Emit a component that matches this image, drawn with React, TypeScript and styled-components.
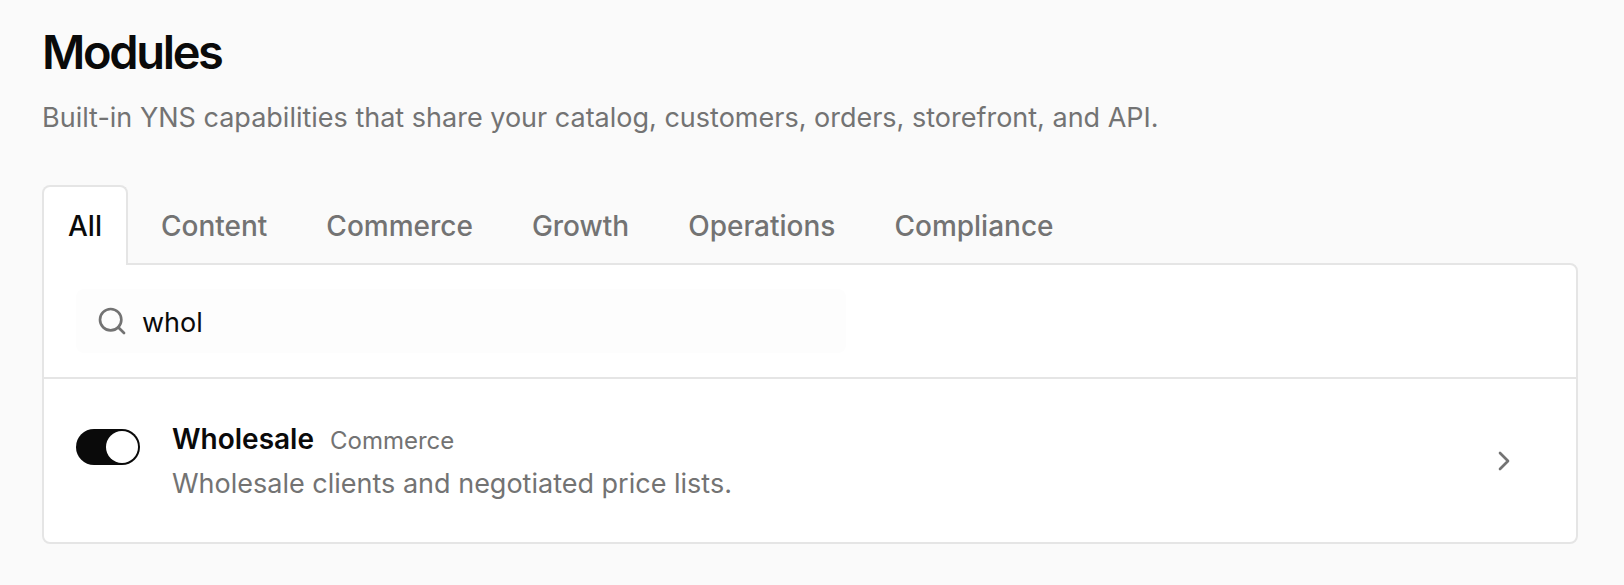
import React, { useState } from "react";
import styled, { createGlobalStyle } from "styled-components";
import { ChevronRight, Search } from "lucide-react";

const GlobalStyle = createGlobalStyle`
  *, *::before, *::after { box-sizing: border-box; }
  body {
    margin: 0;
    background: #fafafa;
    color: #0a0a0a;
    font-family: Inter, "Liberation Sans", sans-serif;
    font-size: 27px;
    line-height: 40px;
  }
  h1, h2, p, ul { margin: 0; padding: 0; }
  button, input { font: inherit; color: inherit; }
`;

const Page = styled.main`
  padding: 20px 46px 40px 42px;
`;

const Title = styled.h1`
  font-size: 47px;
  line-height: 64px;
  font-weight: 600;
  letter-spacing: -0.05em;
`;

const Muted = styled.p`
  color: #737373;
`;

const Header = styled.header`
  display: flex;
  flex-direction: column;
  gap: 14px;
  margin-bottom: 47px;
`;

const TabList = styled.div`
  display: flex;
  gap: 7px;
`;

const Tab = styled.button<{ $active: boolean }>`
  position: relative;
  height: 80px;
  margin-bottom: -2px;
  padding: 0 24px;
  border: 2px solid ${(p) => (p.$active ? "#e5e5e5" : "transparent")};
  border-bottom: 0;
  border-radius: 8px 8px 0 0;
  background: ${(p) => (p.$active ? "#fff" : "transparent")};
  color: ${(p) => (p.$active ? "#0a0a0a" : "#737373")};
  font-size: 28px;
  font-weight: 500;
  cursor: pointer;
  z-index: ${(p) => (p.$active ? 1 : "auto")};
`;

const Panel = styled.section`
  border: 2px solid #e5e5e5;
  border-radius: 0 8px 8px 8px;
  background: #fff;
`;

const Toolbar = styled.div`
  padding: 24px 32px;
  border-bottom: 2px solid #e5e5e5;
`;

const SearchField = styled.label`
  display: flex;
  align-items: center;
  gap: 14px;
  height: 64px;
  max-width: 770px;
  padding: 0 20px;
  border-radius: 8px;
  background: #fdfdfd;
  color: #737373;
`;

const SearchInput = styled.input`
  flex: 1;
  min-width: 0;
  padding: 3px 0 0;
  border: 0;
  outline: 0;
  background: transparent;
  color: #0a0a0a;
`;

const ModuleList = styled.ul`
  list-style: none;
`;

const ModuleRow = styled.li`
  display: flex;
  align-items: center;
  gap: 32px;
  padding: 38px 32px;
`;

const Switch = styled.input`
  appearance: none;
  align-self: flex-start;
  flex: none;
  display: flex;
  justify-content: flex-start;
  width: 64px;
  height: 36px;
  margin: 12px 0 0;
  padding: 2px;
  border-radius: 18px;
  background: #e5e5e5;
  cursor: pointer;

  &::before {
    content: "";
    width: 32px;
    height: 32px;
    border-radius: 50%;
    background: #fff;
  }

  &:checked {
    justify-content: flex-end;
    background: #0a0a0a;
  }
`;

const ModuleText = styled.div`
  flex: 1;
  min-width: 0;
`;

const ModuleHeading = styled.div`
  display: flex;
  align-items: baseline;
  gap: 16px;
  margin-bottom: 3px;
`;

const ModuleName = styled.h2`
  font-size: 28px;
  line-height: 44px;
  font-weight: 600;
`;

const Category = styled.span`
  color: #737373;
  font-size: 24px;
  line-height: 32px;
`;

const OpenButton = styled.button`
  display: flex;
  padding: 24px;
  border: 0;
  background: transparent;
  color: #737373;
  cursor: pointer;
`;

const tabs = ["All", "Content", "Commerce", "Growth", "Operations", "Compliance"];

const modules = [
  {
    name: "Wholesale",
    category: "Commerce",
    description: "Wholesale clients and negotiated price lists.",
  },
];

export default function App() {
  const [active, setActive] = useState("All");
  const [query, setQuery] = useState("whol");
  const [enabled, setEnabled] = useState<Record<string, boolean>>({ Wholesale: true });

  const visible = modules.filter(
    (m) =>
      (active === "All" || m.category === active) &&
      m.name.toLowerCase().includes(query.toLowerCase()),
  );

  return (
    <>
      <GlobalStyle />
      <Page>
        <Header>
          <Title>Modules</Title>
          <Muted>
            Built-in YNS capabilities that share your catalog, customers, orders, storefront, and API.
          </Muted>
        </Header>
        <TabList role="tablist">
          {tabs.map((tab) => (
            <Tab
              key={tab}
              type="button"
              role="tab"
              aria-selected={tab === active}
              $active={tab === active}
              onClick={() => setActive(tab)}
            >
              {tab}
            </Tab>
          ))}
        </TabList>
        <Panel role="tabpanel">
          <Toolbar>
            <SearchField>
              <Search size={32} aria-hidden />
              <SearchInput
                type="text"
                aria-label="Search modules"
                value={query}
                onChange={(e) => setQuery(e.target.value)}
              />
            </SearchField>
          </Toolbar>
          <ModuleList>
            {visible.map((m) => (
              <ModuleRow key={m.name}>
                <Switch
                  type="checkbox"
                  role="switch"
                  aria-label={m.name}
                  checked={!!enabled[m.name]}
                  onChange={(e) => setEnabled({ ...enabled, [m.name]: e.target.checked })}
                />
                <ModuleText>
                  <ModuleHeading>
                    <ModuleName>{m.name}</ModuleName>
                    <Category>{m.category}</Category>
                  </ModuleHeading>
                  <Muted>{m.description}</Muted>
                </ModuleText>
                <OpenButton type="button" aria-label={`Open ${m.name}`}>
                  <ChevronRight size={32} aria-hidden />
                </OpenButton>
              </ModuleRow>
            ))}
          </ModuleList>
        </Panel>
      </Page>
    </>
  );
}
